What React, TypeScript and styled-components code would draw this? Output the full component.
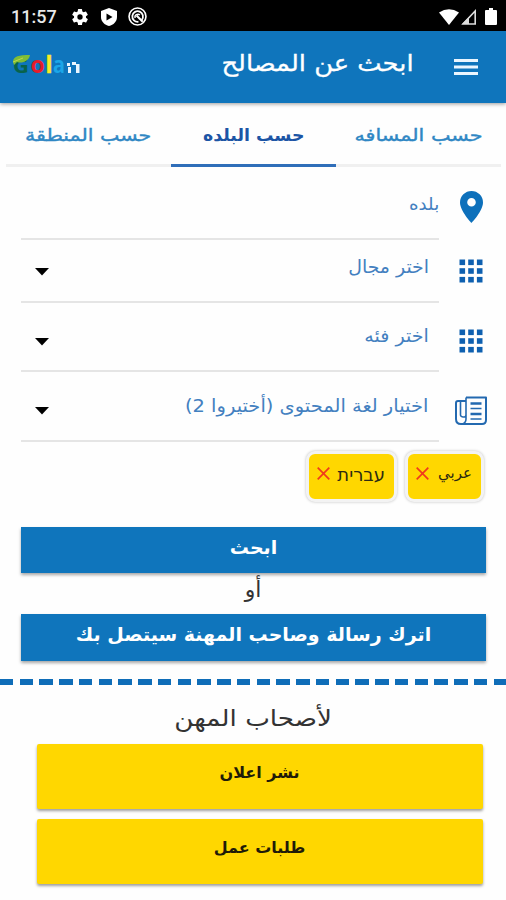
import React from 'react';
import styled, { createGlobalStyle } from 'styled-components';

const Global = createGlobalStyle`
  * { box-sizing: border-box; }
  html, body { margin: 0; padding: 0; background: #fff; }
  body { width: 506px; height: 900px; overflow: hidden; font-family: "DejaVu Sans", sans-serif; }
  button { font-family: inherit; border: 0; padding: 0; }
`;

const Screen = styled.div`
  width: 506px;
  height: 900px;
  display: flex;
  flex-direction: column;
  background: #fefefe;
  overflow: hidden;
`;

const Label = styled.span<{ $size: number; $stretch?: number; $bold?: boolean; $origin?: string; $drop?: number; $weight?: number }>`
  display: inline-block;
  white-space: nowrap;
  font-size: ${p => p.$size}px;
  line-height: 1;
  font-weight: ${p => (p.$bold ? 700 : 400)};
  margin-top: ${p => p.$drop ?? 0}px;
  transform: scaleX(${p => p.$stretch ?? 1});
  transform-origin: ${p => p.$origin ?? 'center'};
  -webkit-text-stroke: ${p => p.$weight ?? 0}px currentColor;
`;

const StatusBar = styled.div`
  height: 31px;
  flex: none;
  background: #000;
  color: #fff;
  display: flex;
  align-items: center;
  justify-content: space-between;
  padding: 2px 9px 0 11px;
`;

const StatusGroup = styled.div<{ $gap: number }>`
  display: flex;
  align-items: center;
  gap: ${p => p.$gap}px;
  svg { display: block; }
`;

const Reception = styled.div`
  display: flex;
  gap: 1px;
`;

const Clock = styled.span`
  font: 500 18px/20px Roboto, sans-serif;
  width: 48px;
  color: #e8e8e8;
`;

const AppBar = styled.header`
  height: 72px;
  flex: none;
  background: #0f75bc;
  color: #fff;
  display: flex;
  align-items: center;
  padding: 0 28px 0 11px;
  box-shadow: 0 1px 4px rgba(0, 0, 0, 0.4);
`;

const Title = styled.h1`
  margin: 0 40px 7px auto;
  font-size: 23px;
  line-height: 1;
`;

const Tabs = styled.nav`
  height: 64px;
  flex: none;
  margin: 0 5px 0 6px;
  display: grid;
  grid-template-columns: repeat(3, 1fr);
`;

const Tab = styled.div<{ $active?: boolean }>`
  display: flex;
  align-items: center;
  justify-content: center;
  padding-top: 4px;
  color: ${p => (p.$active ? '#1c55a5' : '#2f87c4')};
  border-bottom: ${p => (p.$active ? '3px solid #2f6eb9' : '3px solid #f0f0f0')};
`;

const Field = styled.div<{ $height: number }>`
  height: ${p => p.$height}px;
  flex: none;
  display: flex;
  padding-left: 21px;
`;

const FieldInput = styled.div<{ $inset: number; $lift: number }>`
  width: 418px;
  border-bottom: 2px solid #e5e5e5;
  display: flex;
  align-items: center;
  justify-content: space-between;
  padding: 0 ${p => p.$inset}px ${p => p.$lift}px 14px;
  color: #4380c0;
`;

const CaretBox = styled.div<{ $top: number }>`
  align-self: flex-start;
  margin-top: ${p => p.$top}px;
  svg { display: block; }
`;

const FieldIcon = styled.div<{ $top: number }>`
  flex: 1;
  display: flex;
  align-items: flex-start;
  justify-content: center;
  padding: ${p => p.$top}px 3px 0 0;
  svg { display: block; }
`;

const Chips = styled.div`
  height: 84.500px;
  flex: none;
  display: flex;
  gap: 8px;
  justify-content: flex-end;
  padding: 9px 22px 0 0;
`;

const Chip = styled.div<{ $width: number }>`
  width: ${p => p.$width}px;
  height: 51px;
  border: 3px solid #f3f3f3;
  border-radius: 9px;
  background: #ffd700;
  box-shadow: 0 0 3px rgba(0, 0, 0, 0.25);
  display: flex;
  justify-content: space-between;
  padding: 12px 9px 0 8px;
  color: #2d2a12;
  svg { margin-top: 1px; }
`;

const PrimaryButton = styled.button`
  height: 46.500px;
  flex: none;
  margin: 0 20px 0 21px;
  background: #0f75bc;
  color: #fff;
  box-shadow: 0 2px 3px rgba(0, 0, 0, 0.35);
  display: flex;
  justify-content: center;
`;

const Or = styled.div`
  height: 41px;
  flex: none;
  display: flex;
  justify-content: center;
  color: #333;
`;

const Divider = styled.div`
  height: 6px;
  flex: none;
  margin-top: 18.500px;
  background: repeating-linear-gradient(90deg, #0f6db8 0 13.3px, transparent 13.3px 19.75px);
`;

const Owners = styled.section`
  display: flex;
  flex-direction: column;
  align-items: center;
  padding: 22px 23px 0 36px;
  color: #333;
`;

const Heading = styled.h2`
  margin: 0 12px 0 0;
  height: 37px;
  font-size: 23px;
  line-height: 1;
`;

const YellowButton = styled.button`
  width: 446px;
  height: 65px;
  margin-bottom: 10px;
  border-radius: 2px;
  background: #ffd700;
  color: #1f1b08;
  box-shadow: 0 2px 3px rgba(0, 0, 0, 0.38);
  display: flex;
  justify-content: center;
`;

const Gear = () => (
  <svg width="20" height="20" viewBox="0 0 24 24" fill="#fff"><path d="M19.14 12.94c.04-.3.06-.61.06-.94s-.02-.64-.07-.94l2.03-1.58a.49.49 0 0 0 .12-.61l-1.92-3.32a.49.49 0 0 0-.59-.22l-2.39.96a7 7 0 0 0-1.62-.94L14.4 2.81a.48.48 0 0 0-.48-.41h-3.84a.47.47 0 0 0-.47.41l-.36 2.54a7 7 0 0 0-1.62.94l-2.39-.96a.48.48 0 0 0-.59.22L2.74 8.87a.47.47 0 0 0 .12.61l2.03 1.58a6 6 0 0 0 0 1.88l-2.03 1.58a.49.49 0 0 0-.12.61l1.92 3.32c.12.22.37.29.59.22l2.39-.96c.5.38 1.03.7 1.62.94l.36 2.54c.05.24.24.41.48.41h3.84c.24 0 .44-.17.47-.41l.36-2.54a7 7 0 0 0 1.62-.94l2.39.96c.22.08.47 0 .59-.22l1.92-3.32a.47.47 0 0 0-.12-.61zM12 15.200A3.200 3.200 0 1 1 12 8.800a3.200 3.200 0 0 1 0 6.400z" /></svg>
);

const Shield = () => (
  <svg width="16" height="18" viewBox="0 0 16 18"><path d="M8 0l8 3v6c0 4.500-3.500 8-8 9-4.500-1-8-4.500-8-9V3z" fill="#fff" /><path d="M5.500 5.500l6 3.500-6 3.500z" fill="#000" /></svg>
);

const Privacy = () => (
  <svg width="19" height="19" viewBox="0 0 20 20" fill="none" stroke="#fff"><circle cx="10" cy="10" r="8.900" strokeWidth="1.700" /><path d="M14.500 13.500A5.600 5.600 0 1 0 11 15.500" strokeWidth="1.900" /><path d="M7.500 11.500A3 3 0 0 1 12.500 8.500" strokeWidth="1.500" /><path d="M9 9l6.500 6.500" strokeWidth="2.200" /></svg>
);

const Wifi = () => (
  <svg width="20" height="16" viewBox="0 0 20 16"><path d="M0 3.500Q10-3 20 3.500L10 16z" fill="#fff" /></svg>
);

const Signal = () => (
  <svg width="17" height="16" viewBox="0 0 17 16"><path d="M15.200 2v13H3z" fill="none" stroke="#ddd" strokeWidth="1.600" /><path d="M9 8v7H2z" fill="#ddd" /></svg>
);

const Battery = () => (
  <svg width="12" height="17" viewBox="0 0 12 17"><path d="M4 0h4v2h3q1 0 1 1v13q0 1-1 1H1q-1 0-1-1V3q0-1 1-1h3z" fill="#fff" /></svg>
);

const Logo = () => (
  <svg width="76" height="46" viewBox="0 0 76 46" fontFamily="Open Sans, sans-serif" fontWeight="700" fontSize="23">
    <text x="2" y="29" fill="#08634b" fontSize="20" textLength="16" lengthAdjust="spacingAndGlyphs">G</text>
    <text x="19.500" y="29" fill="#e51c2b">o</text>
    <text x="34.500" y="29" fill="#f7ec28" stroke="#f7ec28" strokeWidth=".5">l</text>
    <text x="42" y="29" fill="#1ba6e8" textLength="12" lengthAdjust="spacingAndGlyphs">a</text>
    <path d="M2 18C2 12 8 11 19 11C18 17 11 20 6 18L3 21z" fill="#7fbd37" />
    <path d="M2 18L12 14" stroke="#c0d94a" fill="none" />
    <path d="M56 19h3v3h-3zM61 18h4v3h-4zM57 23h3v6h-3zM65 20h3.500v9H65z" fill="#eaf6ff" />
  </svg>
);

const Menu = () => (
  <svg width="24" height="20" viewBox="0 0 24 20" fill="#eaf6ff"><path d="M0 2h24v3H0zM0 8.500h24v3H0zM0 15h24v3H0z" /></svg>
);

const Pin = () => (
  <svg width="23" height="32" viewBox="0 0 23 32"><path fillRule="evenodd" d="M11.500 0A11.500 11.500 0 0 1 23 11.500C23 20 11.500 32 11.500 32S0 20 0 11.500A11.500 11.500 0 0 1 11.500 0zm0 7a4.300 4.300 0 1 0 0 8.600 4.300 4.300 0 0 0 0-8.600z" fill="#0d70bb" /></svg>
);

const Apps = () => (
  <svg width="24" height="24" viewBox="0 0 24 24" fill="#0e60b0">
    {[0, 1, 2].map(r => [0, 1, 2].map(c => <rect key={`${r}${c}`} x={0.5 + c * 8.700} y={0.5 + r * 8.700} width="5.600" height="5.600" />))}
  </svg>
);

const News = () => (
  <svg width="32" height="29" viewBox="0 0 32 29" fill="none" stroke="#2369b0" strokeWidth="2" strokeLinejoin="round">
    <path d="M11 1.500h20V24q0 4-4 4H6q-5 0-5-5V7q0-2 2-2h8" /><path d="M11 1.500v17q0 3-3 2.500t-2.500-3V5M11 18v5q0 4-4 5" strokeWidth="1.600" /><path d="M15.500 7.500h11M15.500 18h11" strokeWidth="2.400" /><path d="M15.500 12.500h11M15.500 23h11" strokeWidth="1.600" />
  </svg>
);

const Caret = () => (
  <svg width="14" height="8" viewBox="0 0 14 8"><path d="M0 0h14L7 7.500z" fill="#000" /></svg>
);

const Cross = () => (
  <svg width="13" height="13" viewBox="0 0 13 13"><path d="M.7.700l11.600 11.600M12.300.700L.7 12.300" stroke="#f03a1c" strokeWidth="1.700" /></svg>
);

const SELECTS = [
  { text: 'اختر مجال', height: 63, inset: 10, lift: 7, stretch: 1.05, caretTop: 28, iconTop: 19, icon: <Apps /> },
  { text: 'اختر فئه', height: 69, inset: 10, lift: 1, stretch: 1.06, caretTop: 35, iconTop: 26, icon: <Apps /> },
  { text: 'اختيار لغة المحتوى (أختيروا 2)', height: 70, inset: 11, lift: 1, stretch: 1.08, caretTop: 35, iconTop: 24, icon: <News /> },
];

export default function App() {
  return (
    <>
      <Global />
      <Screen>
        <StatusBar>
          <StatusGroup $gap={11}><Clock>11:57</Clock><Gear /><Shield /><Privacy /></StatusGroup>
          <StatusGroup $gap={8}><Reception><Wifi /><Signal /></Reception><Battery /></StatusGroup>
        </StatusBar>
        <AppBar>
          <Logo />
          <Title><Label dir="rtl" $size={23} $stretch={1.12} $weight={0.3} $origin="right">ابحث عن المصالح</Label></Title>
          <Menu />
        </AppBar>
        <Tabs dir="rtl">
          <Tab><Label $size={17} $stretch={1.22} $weight={0.4}>حسب المسافه</Label></Tab>
          <Tab $active><Label $size={17} $stretch={1.02} $bold>حسب البلده</Label></Tab>
          <Tab><Label $size={17} $stretch={1.21} $weight={0.4}>حسب المنطقة</Label></Tab>
        </Tabs>
        <Field $height={73}>
          <FieldInput $inset={0} $lift={0}><span /><Label dir="rtl" $size={17} $stretch={1.07} $drop={4} $origin="right">بلده</Label></FieldInput>
          <FieldIcon $top={24}><Pin /></FieldIcon>
        </Field>
        {SELECTS.map(s => (
          <Field key={s.text} $height={s.height}>
            <FieldInput $inset={s.inset} $lift={s.lift}>
              <CaretBox $top={s.caretTop}><Caret /></CaretBox>
              <Label dir="rtl" $size={18} $stretch={s.stretch} $origin="right">{s.text}</Label>
            </FieldInput>
            <FieldIcon $top={s.iconTop}>{s.icon}</FieldIcon>
          </Field>
        ))}
        <Chips>
          <Chip $width={91}><Cross /><Label dir="rtl" $size={18}>עברית</Label></Chip>
          <Chip $width={79}><Cross /><Label dir="rtl" $size={15}>عربي</Label></Chip>
        </Chips>
        <PrimaryButton><Label dir="rtl" $size={19} $bold $drop={11}>ابحث</Label></PrimaryButton>
        <Or><Label dir="rtl" $size={22} $drop={6}>أو</Label></Or>
        <PrimaryButton><Label dir="rtl" $size={19} $bold $drop={11}>اترك رسالة وصاحب المهنة سيتصل بك</Label></PrimaryButton>
        <Divider />
        <Owners>
          <Heading><Label dir="rtl" $size={23} $stretch={1.14}>لأصحاب المهن</Label></Heading>
          <YellowButton><Label dir="rtl" $size={16} $bold $drop={21}>نشر اعلان</Label></YellowButton>
          <YellowButton><Label dir="rtl" $size={16} $bold $drop={21}>طلبات عمل</Label></YellowButton>
        </Owners>
      </Screen>
    </>
  );
}
